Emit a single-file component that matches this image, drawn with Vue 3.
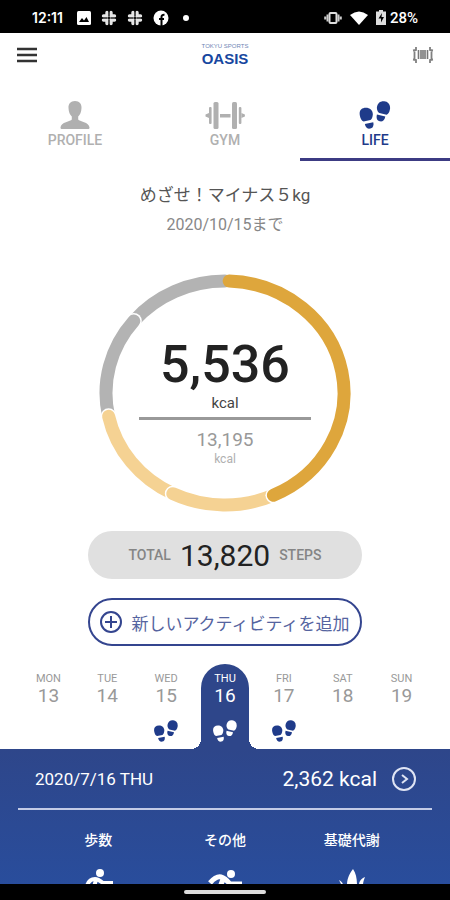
<template>
  <div class="screen">
    <svg class="defs" aria-hidden="true">
      <symbol id="steps" viewBox="0 0 32 29">
        <path d="M.3 15C-.7 10 2 7 6.500 7s7.700 3 7.200 7.500c-.3 3-1.500 4.800-2.500 5.300l-7 1.400C2 20.500.8 18 .3 15z" />
        <path d="M5.500 23.800l8.700-1.800c.8 3.500-.4 6-3 6.600s-5.200-1-5.700-4.800z" />
        <path d="M18 6.500C18.500 2 21.500-.1 25.500.2s6.700 3.500 6 8.300c-.5 2.800-1.700 4.800-3.500 5.700l-7.500-1.800C18.800 11.400 17.800 9 18 6.500z" />
        <path d="M18 14l8.700 2c-.7 3.800-3 5.700-5.700 5.100S17 18 18 14z" />
      </symbol>
      <symbol id="slack" viewBox="0 0 16 16">
        <g fill="none" stroke="#e6e6e6" stroke-width="3.400" stroke-linecap="round">
          <path d="M6 2.500V6M2.500 6H6M13.500 6H10M10 2.500V6M10 13.500V10M13.500 10H10M2.500 10H6M6 13.500V10" />
        </g>
        <path d="M8 1v5M15 8h-5M8 15v-5M1 8h5" stroke="#000" stroke-width="1" />
      </symbol>
    </svg>

    <div class="status-bar">
      <div class="status-left">
        <span class="clock">12:11</span>
        <svg width="14" height="14" viewBox="0 0 14 14">
          <rect width="14" height="14" rx="1.500" fill="#fff" />
          <path d="M2 11l3-4 2 2.500L9.500 6 12 11z" fill="#000" />
        </svg>
        <svg width="16" height="16"><use href="#slack" /></svg>
        <svg width="16" height="16"><use href="#slack" /></svg>
        <svg width="16" height="16" viewBox="0 0 16 16">
          <circle cx="8" cy="8" r="7.500" fill="#fff" />
          <path d="M8.500 16V7q0-2.500 3-2.300M6 9h5" fill="none" stroke="#000" stroke-width="2" />
        </svg>
        <span class="dot"></span>
      </div>
      <div class="status-right">
        <svg width="18" height="14" viewBox="0 0 18 14">
          <rect x="5.500" y="2" width="7" height="10" rx="1" fill="none" stroke="#ddd" stroke-width="2" />
          <path d="M3.500 3.500v7M1.200 5.500v3M14.500 3.500v7M16.800 5.500v3" stroke="#ccc" stroke-width="2" />
        </svg>
        <svg width="18" height="14" viewBox="0 0 18 14">
          <path d="M0 4Q9-3 18 4L9 14z" fill="#fff" />
        </svg>
        <span class="battery">
          <svg width="10" height="15" viewBox="0 0 10 15">
            <path d="M3 0h4v1.500h3V15H0V1.500h3z" fill="#ddd" />
            <path d="M6 3L2.500 8.500H5V12.500L8 7H5.500z" fill="#000" />
          </svg>
          28%
        </span>
      </div>
    </div>

    <header class="header">
      <button type="button" class="icon-button" aria-label="メニュー">
        <svg width="22" height="16" viewBox="0 0 22 16">
          <path d="M1 2h20M1 8h20M1 14h20" stroke="#333" stroke-width="2.600" />
        </svg>
      </button>
      <a href="#" class="logo">
        <span class="logo-small">TOKYU SPORTS</span>
        <span class="logo-name">OASIS</span>
      </a>
      <button type="button" class="icon-button" aria-label="バーコード">
        <svg width="22" height="18" viewBox="0 0 22 18">
          <path
            d="M1 4.500l3-.5V1M21 4.500L18 4V1M1 13.500l3 .5v3M21 13.500l-3 .5v3M2.500 4v10M19.500 4v10"
            fill="none"
            stroke="#808080"
            stroke-width="1.800"
          />
          <path d="M6.500 4v9M9 4v9M11 4v9M13 4v9M15.500 4v9" stroke="#777" stroke-width="1.600" />
        </svg>
      </button>
    </header>

    <nav class="tabs">
      <a href="#" class="tab">
        <svg width="30" height="28" viewBox="0 0 30 28">
          <path
            d="M15 0c4.500 0 6.700 3 6.500 7-.1 4-1.500 7-3.300 8.500v3c1 2 11 2.500 11.300 8 0 1-.5 1.500-1.500 1.500H2c-1 0-1.500-.5-1.500-1.500.3-5.500 10.300-6 11.300-8v-3C10 14 8.600 11 8.500 7 8.300 3 10.500 0 15 0z"
            fill="currentColor"
          />
        </svg>
        PROFILE
      </a>
      <a href="#" class="tab">
        <svg width="40" height="28" viewBox="0 0 40 28">
          <g fill="currentColor">
            <rect x="8.500" y="1" width="5" height="27" rx="1.500" />
            <rect x="27" y="1" width="5" height="27" rx="1.500" />
            <rect x="4" y="6" width="2.600" height="17" rx="1" />
            <rect x="33.800" y="6" width="2.600" height="17" rx="1" />
            <rect x="15" y="13" width="10.500" height="3.500" />
            <path d="M4 12v5L.5 15.500v-2zM36.400 12v5l3.500-1.500v-2z" />
          </g>
        </svg>
        GYM
      </a>
      <a href="#" class="tab active">
        <svg width="32" height="28"><use href="#steps" /></svg>
        LIFE
      </a>
    </nav>

    <main class="content">
      <section class="goal">
        <h1>めざせ！マイナス５kg</h1>
        <p>2020/10/15まで</p>
      </section>

      <section class="ring">
        <svg viewBox="0 0 252 240" aria-hidden="true">
          <g v-for="arc in arcs" :key="arc.to">
            <circle :cx="point(arc.to).x" :cy="point(arc.to).y" r="8" fill="#fff" />
            <path :d="arcPath(arc)" :stroke="arc.color" />
          </g>
        </svg>
        <div class="ring-text">
          <strong>5,536</strong>
          <span class="unit">kcal</span>
          <hr />
          <span class="target">13,195</span>
          <span class="target-unit">kcal</span>
        </div>
      </section>

      <div class="total">
        <span>TOTAL</span>
        <strong>13,820</strong>
        <span>STEPS</span>
      </div>

      <button type="button" class="add">
        <svg width="22" height="22" viewBox="0 0 22 22">
          <circle cx="11" cy="11" r="10" />
          <path d="M11 5v12M5 11h12" />
        </svg>
        新しいアクティビティを追加
      </button>

      <section class="week">
        <button
          v-for="day in days"
          :key="day.date"
          type="button"
          class="day"
          :class="{ selected: day.date === selected }"
          @click="selected = day.date"
        >
          <span class="day-name">{{ day.name }}</span>
          <span class="day-date">{{ day.date }}</span>
          <svg v-if="day.steps" width="24" height="22"><use href="#steps" /></svg>
        </button>
      </section>

      <section class="detail">
        <div class="summary">
          <span class="summary-date">{{ summaryDate }}</span>
          <span class="summary-kcal">2,362 kcal</span>
          <button type="button" class="icon-button" aria-label="詳細">
            <svg width="24" height="24" viewBox="0 0 24 24" fill="none" stroke="#dfe4f4" stroke-width="2">
              <circle cx="12" cy="12" r="11" />
              <path d="M10 8l5 4-5 4" />
            </svg>
          </button>
        </div>
        <div class="kinds">
          <div class="kind">
            歩数
            <svg width="32" height="32" viewBox="0 0 32 32">
              <circle cx="18" cy="4" r="4" />
              <path
                d="M5 17q2-7 8-7 3 0 8 4h10M14 11l-3 10 7 4v7M11 21l-7 8"
                fill="none"
                stroke="#fff"
                stroke-width="4"
              />
            </svg>
          </div>
          <div class="kind">
            その他
            <svg width="36" height="32" viewBox="0 0 36 32">
              <circle cx="24" cy="5" r="4" />
              <path
                d="M3 14q6-7 11-6 4 1 9 7h12M16 10l-4 11 7 3v8M11 22l-9 7"
                fill="none"
                stroke="#fff"
                stroke-width="5"
              />
            </svg>
          </div>
          <div class="kind">
            基礎代謝
            <svg width="32" height="32" viewBox="0 0 32 32">
              <path
                d="M17 0c3 4 4 10 4 16h2c0-4 3-7 6-8-1 3-2 5-2 8 1 9-4 15-11 15S5 24 6 17l-3-6c2 1 4 3 4 5h4c0-7 3-12 6-16z"
              />
            </svg>
          </div>
        </div>
      </section>
    </main>

    <div class="nav-bar"><span></span></div>
  </div>
</template>

<script setup>
import { computed, ref } from "vue";

const selected = ref(16);

const days = [
  { name: "MON", date: 13, steps: false },
  { name: "TUE", date: 14, steps: false },
  { name: "WED", date: 15, steps: true },
  { name: "THU", date: 16, steps: true },
  { name: "FRI", date: 17, steps: true },
  { name: "SAT", date: 18, steps: false },
  { name: "SUN", date: 19, steps: false },
];

const summaryDate = computed(() => {
  const day = days.find((d) => d.date === selected.value);
  return `2020/7/${day.date} ${day.name}`;
});

// Angles in degrees, clockwise from the top. Later arcs cover earlier ones.
const arcs = [
  { from: 310, to: 360, color: "#b3b3b3" },
  { from: 258, to: 310, color: "#b3b3b3" },
  { from: 206, to: 258, color: "#f5d293" },
  { from: 156, to: 206, color: "#f5d293" },
  { from: 2, to: 156, color: "#dea63c" },
];

const RX = 119;
const RY = 112;

function point(deg) {
  const rad = (deg * Math.PI) / 180;
  return { x: 126 + RX * Math.sin(rad), y: 120 - RY * Math.cos(rad) };
}

// Each arc starts flat under its neighbour and only its ends are rounded.
function arcPath({ from, to }) {
  const a = point(from);
  const b = point(to);
  return `M${a.x} ${a.y}A${RX} ${RY} 0 0 1 ${b.x} ${b.y}`;
}
</script>

<style>
body {
  margin: 0;
  background: #ffffff;
}
</style>

<style scoped>
.screen {
  height: 100vh;
  display: flex;
  flex-direction: column;
  overflow: hidden;
  font-family: Roboto, "Noto Sans CJK JP", sans-serif;
  color: #222222;
  background: #ffffff;
}

.defs {
  position: absolute;
  width: 0;
  height: 0;
}

svg {
  flex-shrink: 0;
}

button {
  padding: 0;
  border: none;
  background: none;
  font-family: inherit;
  cursor: pointer;
}

a {
  text-decoration: none;
}

.status-bar {
  flex-shrink: 0;
  height: 33px;
  padding: 2px 32px 0;
  box-sizing: border-box;
  display: flex;
  justify-content: space-between;
  align-items: center;
  background: #000000;
  color: #ffffff;
  font-size: 15px;
}

.status-left,
.status-right {
  display: flex;
  align-items: center;
}

.status-left {
  gap: 10px;
}

.status-right {
  gap: 8px;
}

.clock {
  margin-right: 4px;
  font-family: Inter, sans-serif;
  font-size: 14px;
  font-weight: 600;
}

.battery {
  display: flex;
  align-items: center;
  gap: 4px;
  font-weight: 500;
}

.dot {
  width: 6px;
  height: 6px;
  margin-left: 4px;
  border-radius: 50%;
  background: #ffffff;
}

.header {
  flex-shrink: 0;
  height: 44px;
  padding: 0 16px;
  display: flex;
  justify-content: space-between;
  align-items: center;
}

.icon-button {
  display: flex;
}

.logo {
  display: flex;
  flex-direction: column;
  align-items: center;
  color: #1747a0;
  font-family: "Liberation Sans", sans-serif;
  font-weight: 700;
}

.logo-small {
  font-size: 6px;
  font-weight: 400;
  line-height: 7px;
  color: #6f86b5;
}

.logo-name {
  font-size: 15px;
  line-height: 17px;
}

.tabs {
  flex-shrink: 0;
  display: flex;
}

.tab {
  flex: 1;
  height: 84px;
  padding-top: 24px;
  box-sizing: border-box;
  display: flex;
  flex-direction: column;
  align-items: center;
  gap: 3px;
  color: #b0b0b0;
  border-bottom: 3px solid transparent;
  font-size: 14px;
  font-weight: 500;
  line-height: 16px;
}

.tab svg {
  fill: currentColor;
}

.tab.active {
  color: #1f3b8a;
  border-color: #3c3b83;
}

.content {
  flex: 1;
  min-height: 0;
  display: flex;
  flex-direction: column;
  align-items: center;
  overflow: hidden;
}

.content > * {
  flex-shrink: 0;
}

.goal {
  padding-top: 22px;
  text-align: center;
}

.goal h1 {
  margin: 0;
  font-size: 17px;
  font-weight: 400;
  line-height: 24px;
  color: #555555;
}

.goal p {
  margin: 6px 0 0;
  font-size: 16px;
  line-height: 24px;
  color: #888888;
}

.ring {
  width: 56%;
  margin-top: 36px;
  display: grid;
}

.ring > * {
  grid-area: 1 / 1;
}

.ring svg {
  width: 100%;
}

.ring path {
  fill: none;
  stroke-width: 13;
  stroke-linecap: round;
}

.ring-text {
  padding-top: 62px;
  display: flex;
  flex-direction: column;
  align-items: center;
}

.ring-text strong {
  font-size: 52px;
  font-weight: 500;
  line-height: 60px;
}

.ring-text hr {
  width: 68%;
  height: 3px;
  margin: 6px 0 9px;
  border: none;
  background: #999999;
}

.unit {
  font-size: 15px;
  line-height: 16px;
  color: #444444;
}

.target {
  font-size: 19px;
  line-height: 22px;
  color: #999999;
}

.target-unit {
  font-size: 12px;
  line-height: 16px;
  color: #b0b0b0;
}

.total,
.add {
  width: 61%;
  height: 48px;
  box-sizing: border-box;
  display: flex;
  justify-content: center;
  align-items: center;
  border-radius: 24px;
}

.total {
  margin-top: 18px;
  gap: 9px;
  background: #e0e0e0;
  font-size: 14px;
  font-weight: 500;
  color: #858585;
}

.total strong {
  font-size: 30px;
  font-weight: 400;
  color: #222222;
}

.add {
  margin-top: 19px;
  gap: 9px;
  border: 2px solid #34458f;
  font-size: 17px;
  white-space: nowrap;
  color: #5564a0;
}

.add svg {
  fill: none;
  stroke: #34458f;
  stroke-width: 2;
}

.week {
  align-self: stretch;
  margin-top: 18px;
  padding: 0 19px;
  display: flex;
}

.day {
  flex: 1;
  height: 85px;
  margin: 0 5px;
  padding-top: 8px;
  display: flex;
  flex-direction: column;
  align-items: center;
  position: relative;
  color: #999999;
}

.day svg {
  margin-top: 13px;
  fill: #1f3b8a;
}

.day-name {
  font-size: 11px;
  line-height: 13px;
}

.day-date {
  font-size: 19px;
  line-height: 22px;
}

.day.selected {
  color: #ffffff;
  background: #2e468a;
  border-radius: 24px 24px 0 0;
}

.day.selected svg {
  fill: #ffffff;
}

/* curved feet where the selected day joins the panel */
.day.selected::before,
.day.selected::after {
  content: "";
  position: absolute;
  bottom: 0;
  width: 10px;
  height: 10px;
}

.day.selected::before {
  right: 100%;
  background: radial-gradient(circle at 0 0, transparent 10px, #2e468a 10px);
}

.day.selected::after {
  left: 100%;
  background: radial-gradient(circle at 100% 0, transparent 10px, #2e468a 10px);
}

.detail {
  align-self: stretch;
  padding: 0 18px;
  background: linear-gradient(#2e468a, #294d9c 135px);
  color: #ffffff;
}

.summary {
  height: 61px;
  padding: 0 16px 0 17px;
  box-sizing: border-box;
  display: flex;
  align-items: center;
  gap: 15px;
  border-bottom: 2px solid #c3cbe6;
}

.summary-date {
  flex: 1;
  font-size: 17px;
}

.summary-kcal {
  font-size: 21px;
}

.kinds {
  padding: 20px 17px;
  display: flex;
}

.kind {
  flex: 1;
  display: flex;
  flex-direction: column;
  align-items: center;
  gap: 19px;
  font-size: 14px;
  font-weight: 500;
  line-height: 20px;
  white-space: nowrap;
}

.kind svg {
  fill: #ffffff;
}

.nav-bar {
  flex-shrink: 0;
  height: 16px;
  display: flex;
  justify-content: center;
  align-items: center;
  background: #000000;
}

.nav-bar span {
  width: 82px;
  height: 4px;
  border-radius: 2px;
  background: #dddddd;
}
</style>
